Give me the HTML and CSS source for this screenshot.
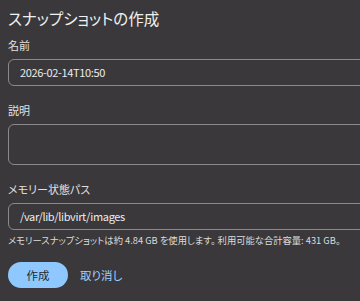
FILE: index.html
```html
<!DOCTYPE html>
<html lang="ja">
<head>
    <meta charset="UTF-8">
    <title>スナップショットの作成</title>
    <link rel="stylesheet" href="styles.css">
</head>
<body>
    <div class="dialog">
        <h2 class="title">スナップショットの作成</h2>

        <div class="group">
            <label class="label">名前</label>
            <div class="input">2026-02-14T10:50</div>
        </div>

        <div class="group">
            <label class="label">説明</label>
            <div class="input textarea"></div>
        </div>

        <div class="group">
            <label class="label">メモリー状態パス</label>
            <div class="input">/var/lib/libvirt/images</div>
            <div class="hint">メモリースナップショットは約 4.84 GB を使用します。 利用可能な合計容量: 431 GB。</div>
        </div>

        <div class="actions">
            <button class="btn primary">作成</button>
            <button class="btn link">取り消し</button>
        </div>
    </div>
</body>
</html>
```

FILE: styles.css
```css
body {
    margin: 0;
    background: #3a383b;
    font-family: 'Noto Sans CJK JP', 'Noto Sans', sans-serif;
    font-feature-settings: "palt";
    color: #e6e6e6;
    overflow: hidden;
}

.dialog {
    width: 420px;
    padding: 5px 8px;
}

.title {
    margin: 0 0 5px;
    font-size: 15.5px;
    font-weight: 400;
    line-height: 26px;
    color: #f0f0f0;
}

.group {
    margin-bottom: 15px;
}

.label {
    display: block;
    font-size: 11px;
    line-height: 18px;
    margin-bottom: 5px;
    color: #e0e0e0;
}

.input {
    box-sizing: border-box;
    height: 27px;
    border: 1px solid #8b898c;
    border-radius: 6px;
    padding: 0 11px;
    font-size: 11px;
    letter-spacing: -0.35px;
    line-height: 25px;
    color: #ececec;
}

.textarea {
    height: 41px;
}

.hint {
    font-size: 9.3px;
    line-height: 14px;
    margin-top: 3px;
    color: #dcdcdc;
    white-space: nowrap;
}

.actions {
    display: flex;
    align-items: center;
    gap: 4px;
}

.btn {
    font-family: inherit;
    font-feature-settings: "palt";
    font-size: 11.5px;
    border: none;
    background: none;
    cursor: pointer;
}

.primary {
    width: 60px;
    height: 26px;
    border-radius: 13px;
    background: #8ec8ff;
    color: #1e2a3a;
}

.link {
    padding: 0 8px;
    color: #9fd0ff;
}
```
